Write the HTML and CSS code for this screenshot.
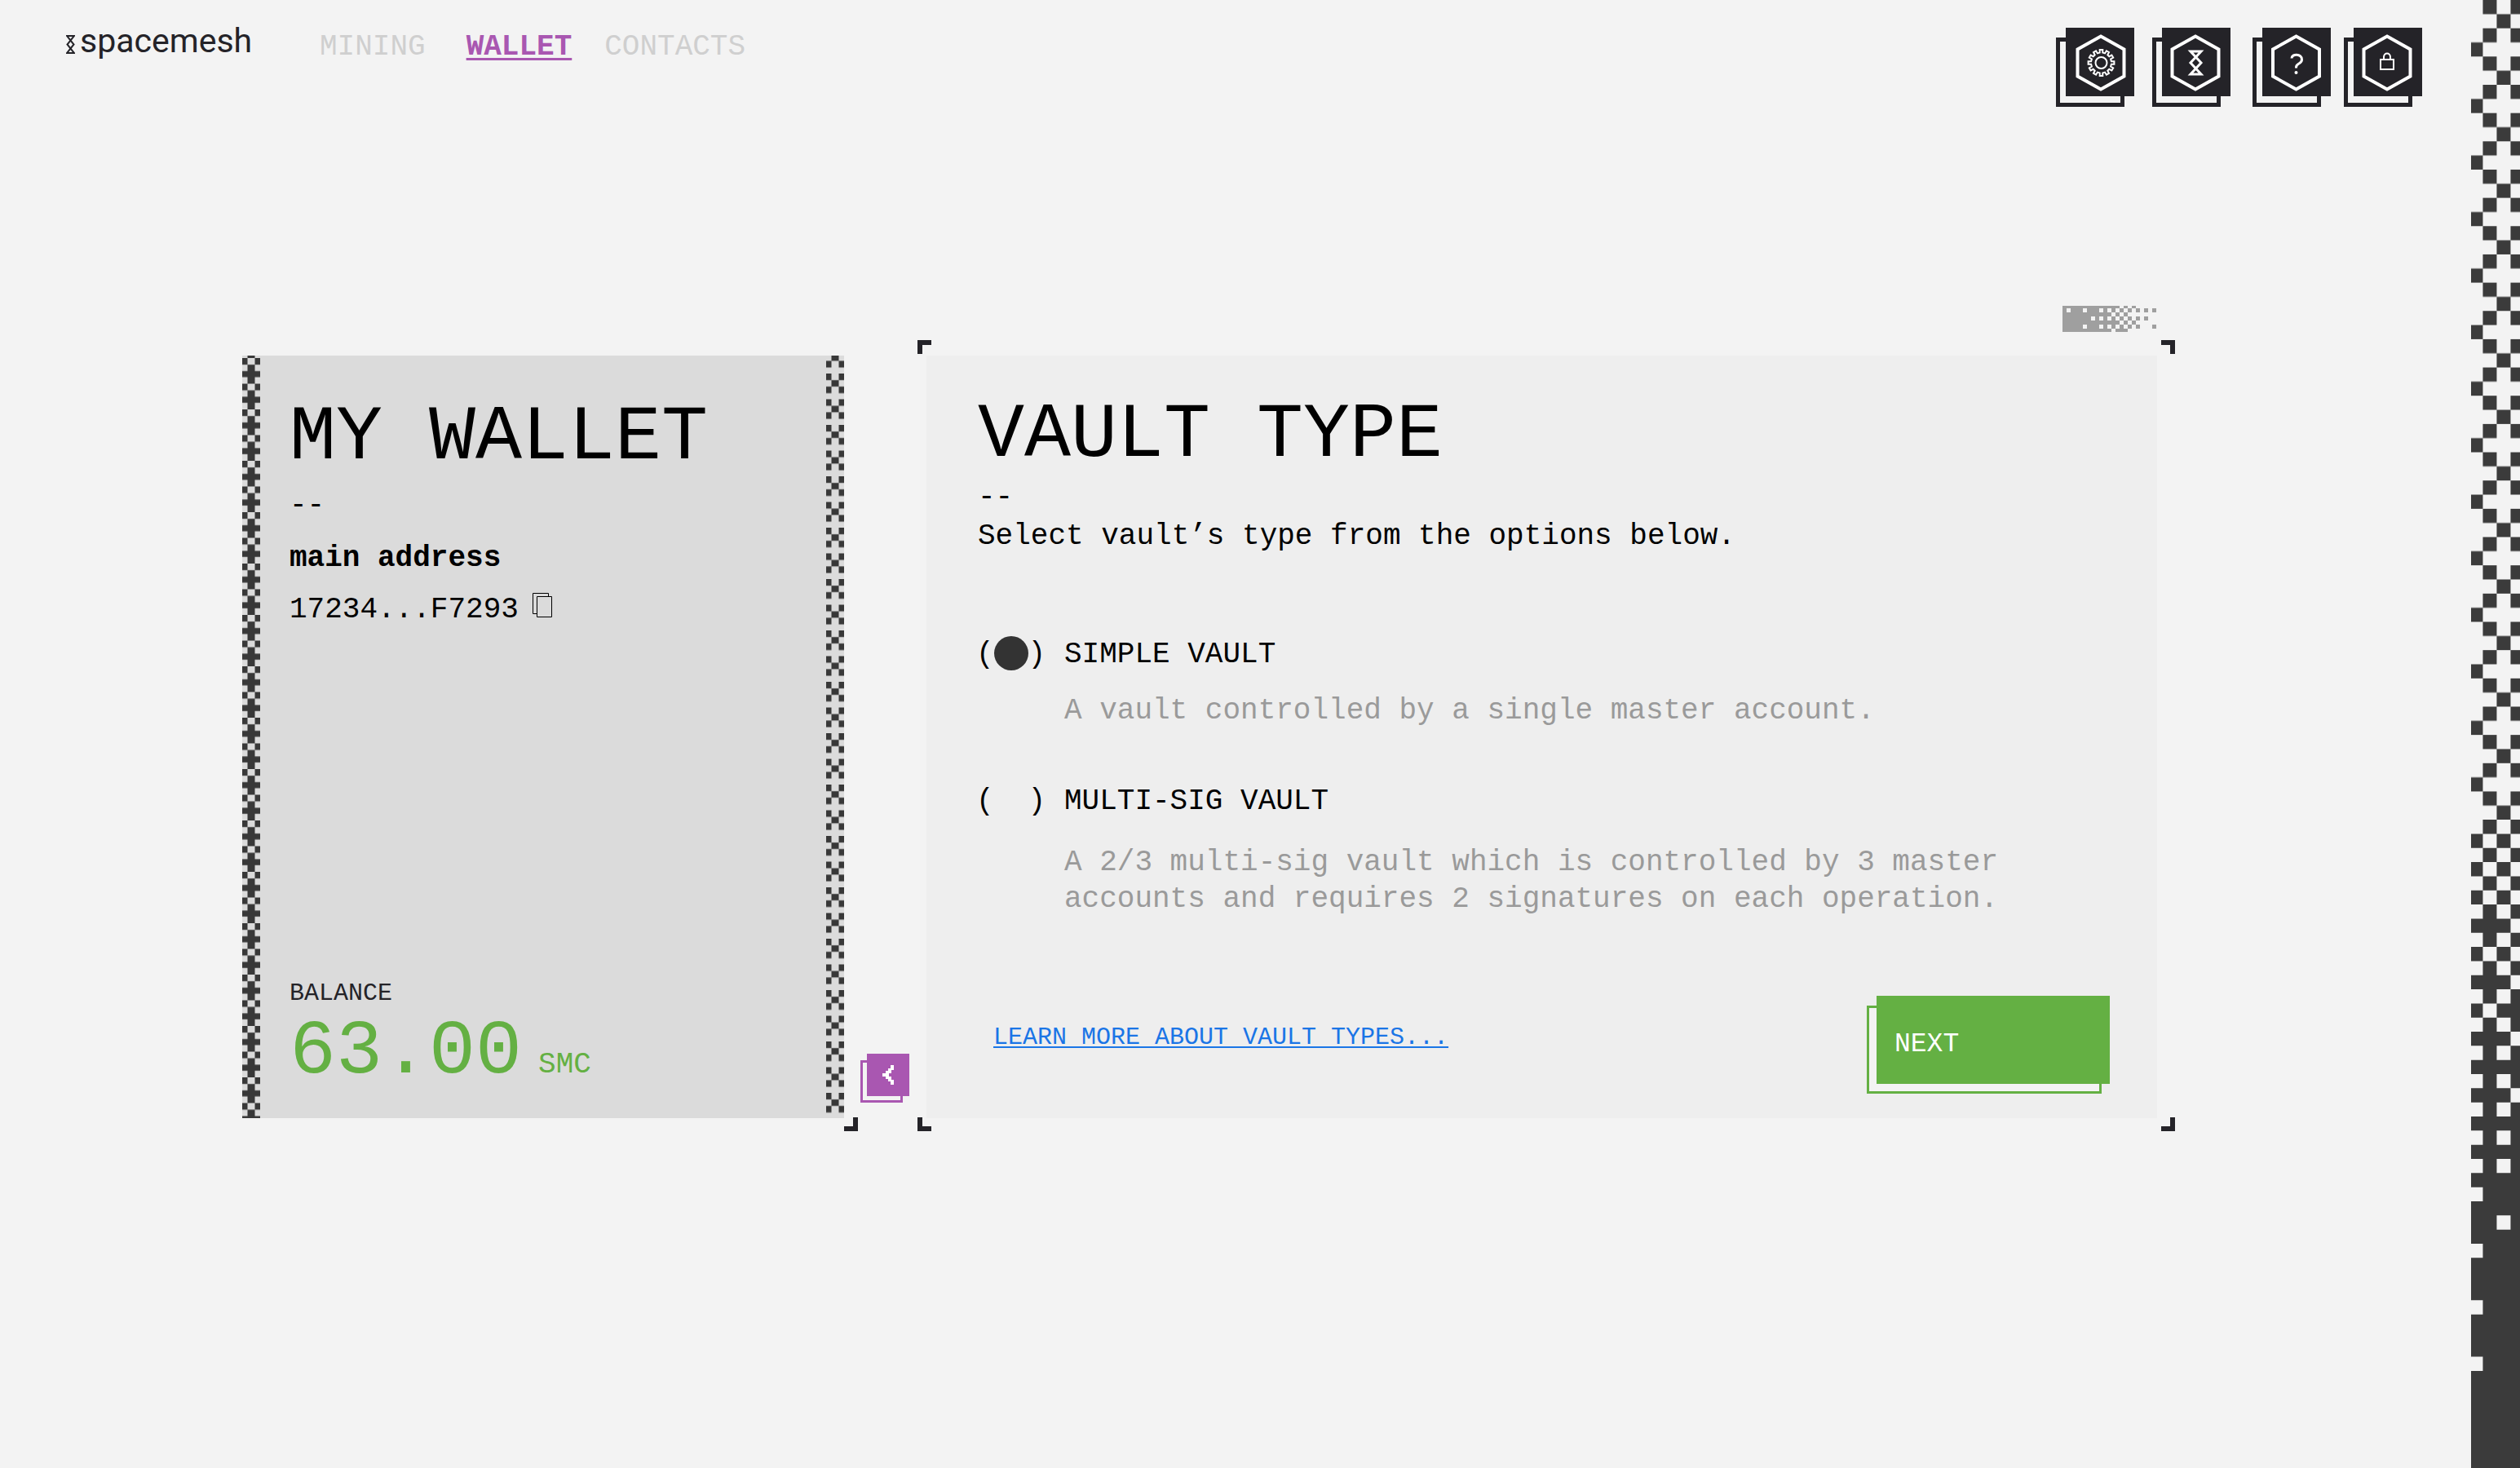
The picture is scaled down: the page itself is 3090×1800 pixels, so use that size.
FILE: index.html
```html
<!DOCTYPE html>
<html lang="en">
<head>
<meta charset="utf-8">
<meta name="viewport" content="width=device-width, initial-scale=1">
<title>Spacemesh – Vault type</title>
<link rel="stylesheet" href="styles.css">
</head>
<body>
<div class="app">
  <div class="content">
    <header class="header">
      <a class="logo" href="#">
        <svg class="logo-mark" viewBox="0 0 11 23" aria-hidden="true"><path d="M1 1h9L1.500 11.500 10 22H1L9.500 11.500z"/></svg>
        <span>spacemesh</span>
      </a>
      <nav class="nav">
        <a class="nav-link nav-mining" href="#">MINING</a>
        <a class="nav-link nav-active" href="#">WALLET</a>
        <a class="nav-link" href="#">CONTACTS</a>
      </nav>
      <div class="tools">
        <button class="tool tool-settings" aria-label="Settings">
          <svg viewBox="0 0 84 84" aria-hidden="true">
            <path class="hex" d="M43 10.500 71.500 26.500V59.500L43 75.500 14.500 59.500V26.500Z"/>
            <g class="line" transform="translate(43.500 43)">
              <circle r="7"/>
              <path d="M-1.800-15.900 1.800-15.900 1.800-12.400 4.600-11.600 6.400-14.700 9.500-12.900 7.800-9.800 9.800-7.800 12.900-9.500 14.700-6.400 11.600-4.600 12.400-1.800 15.900-1.800 15.900 1.800 12.400 1.800 11.600 4.600 14.700 6.400 12.900 9.500 9.800 7.800 7.800 9.800 9.500 12.900 6.400 14.700 4.600 11.600 1.800 12.400 1.800 15.900-1.800 15.900-1.800 12.400-4.600 11.600-6.400 14.700-9.500 12.900-7.800 9.800-9.800 7.800-12.900 9.500-14.700 6.400-11.600 4.600-12.400 1.800-15.900 1.800-15.900-1.800-12.400-1.800-11.600-4.600-14.700-6.400-12.900-9.500-9.800-7.800-7.800-9.800-9.500-12.900-6.400-14.700-4.600-11.600-1.800-12.400z"/>
            </g>
          </svg>
        </button>
        <button class="tool tool-network" aria-label="Network">
          <svg viewBox="0 0 84 84" aria-hidden="true">
            <path class="hex" d="M41 10.500 69.500 26.500V59.500L41 75.500 12.500 59.500V26.500Z"/>
            <path class="line mark" d="M35 29h13L35 43l13 14H35l13-14z"/>
          </svg>
        </button>
        <button class="tool tool-help" aria-label="Help">
          <svg viewBox="0 0 84 84" aria-hidden="true">
            <path class="hex" d="M41.500 10.500 70 26.500V59.500L41.500 75.500 13 59.500V26.500Z"/>
            <path class="line mark" d="M36 37.500c0-6 12.500-6 12.500 1.500 0 6-7 4-7 9.500v1"/>
            <circle class="dot" cx="41.500" cy="55" r="2"/>
          </svg>
        </button>
        <button class="tool" aria-label="Lock">
          <svg viewBox="0 0 84 84" aria-hidden="true">
            <path class="hex" d="M41 10.500 69.500 26.500V59.500L41 75.500 12.500 59.500V26.500Z"/>
            <path class="line" d="M33 39h16v12H33zM37 39v-3c0-6 8-6 8 0v3"/>
          </svg>
        </button>
      </div>
    </header>

    <main class="main">
      <section class="wallet">
        <svg class="edge" aria-hidden="true">
          <defs>
            <pattern id="edge-left" width="22" height="31.500" patternUnits="userSpaceOnUse" y="3">
              <path d="M0 0h6.500v8H0zM15.500 0H22v8h-6.500zM6.500 8h9v23.500h-9zM0 16h22v7.500H0z"/>
            </pattern>
          </defs>
          <rect width="22" height="100%" fill="url(#edge-left)"/>
        </svg>
        <div class="wallet-body">
          <h1 class="title">MY WALLET</h1>
          <p class="dashes">--</p>
          <h2 class="address-label">main address</h2>
          <div class="address">
            <span>17234...F7293</span>
            <button class="copy" aria-label="Copy address">
              <svg viewBox="0 0 26 32" aria-hidden="true"><path d="M6.500 6.500h18v25h-18zM6.500 27.500h-5v-25h19v4"/></svg>
            </button>
          </div>
          <div class="balance">
            <p class="balance-label">BALANCE</p>
            <p class="balance-value">63.00 <span class="unit">SMC</span></p>
          </div>
        </div>
        <svg class="edge" aria-hidden="true">
          <defs>
            <pattern id="edge-right" width="22" height="31.500" patternUnits="userSpaceOnUse" y="-9.500">
              <path d="M0 0h6.500v8H0zM15.500 0H22v8h-6.500zM6.500 8h9v8h-9zM0 16h6.500v8H0zM15.500 16H22v8h-6.500z"/>
            </pattern>
          </defs>
          <rect width="22" height="100%" fill="url(#edge-right)"/>
        </svg>
        <i class="corner corner-wallet"></i>
      </section>

      <button class="back" aria-label="Back">
        <svg viewBox="0 0 52 52" aria-hidden="true"><path d="M29 14h4v6h-3v4h-3v4h3v4h3v6h-4v-4h-3v-3h-3v-3h-4v-4h4v-3h3v-3h3z"/></svg>
      </button>

      <section class="vault">
        <svg class="pixels" viewBox="0 0 115 33" aria-hidden="true">
          <path fill-rule="evenodd" d="M0 0h70v3H0zM75 0h5v3h-5zM85 0h5v3h-5z
            M0 3h65v5H0zM5 3h5v5H5zM25 3h5v5h-5zM45 3h5v5h-5zM55 3h5v5h-5zM70 3h5v5h-5zM80 3h5v5h-5zM90 3h5v5h-5zM100 3h5v5h-5zM110 3h5v5h-5z
            M0 8h60v5H0zM65 8h5v5h-5zM75 8h5v5h-5z
            M0 13h65v5H0zM35 13h5v5h-5zM45 13h5v5h-5zM55 13h5v5h-5zM70 13h5v5h-5zM80 13h5v5h-5zM90 13h5v5h-5zM100 13h5v5h-5z
            M0 18h70v5H0zM75 18h5v5h-5zM85 18h5v5h-5z
            M0 23h65v5H0zM25 23h5v5h-5zM45 23h5v5h-5zM55 23h5v5h-5zM70 23h5v5h-5zM80 23h5v5h-5zM90 23h5v5h-5zM110 23h5v5h-5z
            M0 28h60v4H0zM65 28h15v4H65z"/>
        </svg>
        <i class="corner corner-tl"></i>
        <i class="corner corner-tr"></i>
        <i class="corner corner-bl"></i>
        <i class="corner corner-br"></i>
        <h1 class="title">VAULT TYPE</h1>
        <p class="dashes">--</p>
        <p>Select vault’s type from the options below.</p>
        <form class="form">
          <div class="option">
            <label class="option-label">
              <span class="choice"><span>(</span><input type="radio" name="vault" checked aria-describedby="simple-text"><span>)</span></span>
              SIMPLE VAULT
            </label>
            <p class="option-text option-text-near" id="simple-text">A vault controlled by a single master account.</p>
          </div>
          <div class="option">
            <label class="option-label">
              <span class="choice"><span>(</span><input type="radio" name="vault" aria-describedby="multi-text"><span>)</span></span>
              MULTI-SIG VAULT
            </label>
            <p class="option-text" id="multi-text">A 2/3 multi-sig vault which is controlled by 3 master accounts and requires 2 signatures on each operation.</p>
          </div>
          <div class="actions">
            <a class="learn" href="#">LEARN MORE ABOUT VAULT TYPES...</a>
            <button class="next" type="button"><span>NEXT</span></button>
          </div>
        </form>
      </section>
    </main>
  </div>
  <svg class="strip" viewBox="0.15 0 3.53 103.87" preserveAspectRatio="none" aria-hidden="true">
    <defs>
      <pattern id="weave" width="4" height="4" patternUnits="userSpaceOnUse">
        <path d="M1 0h1v1H1zM3 0h1v1H3zM2 1h1v1H2zM1 2h1v1H1zM3 2h1v1H3zM0 3h1v1H0z"/>
      </pattern>
    </defs>
    <rect width="4" height="58" fill="url(#weave)"/>
    <path fill-rule="evenodd" d="M0 58h4v46H0z
      M0 58h1v1H0zM2 58h1v1H2zM1 59h1v1H1zM3 59h1v1H3z
      M0 60h1v1H0zM2 60h1v1H2zM1 61h1v1H1zM3 61h1v1H3z
      M0 62h1v1H0zM2 62h1v1H2zM1 63h1v1H1zM3 63h1v1H3z
      M0 64h1v1H0zM2 64h1v1H2zM3 65h1v1H3z
      M0 66h1v1H0zM2 66h1v1H2zM1 67h1v1H1zM3 67h1v1H3z
      M0 68h1v1H0zM2 68h1v1H2zM3 69h1v1H3z
      M0 70h1v1H0zM2 70h1v1H2zM1 71h1v1H1z
      M0 72h1v1H0zM2 72h1v1H2zM3 73h1v1H3z
      M0 74h1v1H0zM2 74h1v1H2zM0 76h1v1H0zM2 76h1v1H2zM3 77h1v1H3z
      M0 78h1v1H0zM2 78h1v1H2zM0 80h1v1H0zM2 80h1v1H2z
      M0 82h1v1H0zM2 82h1v1H2zM0 84h1v1H0zM2 86h1v1H2z
      M0 88h1v1H0zM0 92h1v1H0zM0 96h1v1H0z"/>
  </svg>
</div>
</body>
</html>
```
FILE: styles.css
```css
:root {
  --ink: #242328;
  --page: #f3f3f3;
  --green: #64b043;
  --purple: #a957b1;
  --grey: #9a9a9a;
}

* {
  box-sizing: border-box;
}

body {
  margin: 0;
  background: var(--page);
  color: #000;
  font: 400 36px/45px "Liberation Mono", monospace;
}

h1, h2, p {
  margin: 0;
  font-size: inherit;
}

a {
  color: inherit;
  text-decoration: none;
}

button {
  padding: 0;
  border: 0;
  background: none;
  color: inherit;
  font: inherit;
  cursor: pointer;
}

svg {
  display: block;
}

.app {
  display: grid;
  grid-template-columns: minmax(0, 1fr) 60px;
  min-height: 100vh;
}

.strip {
  width: 60px;
  height: 100%;
  fill: #3b3b3b;
}

/* Header */

.header {
  display: flex;
  align-items: flex-start;
  padding: 28px 60px 0 81px;
}

.logo {
  display: flex;
  align-items: center;
  gap: 6px;
  width: 311px;
  color: var(--ink);
  font-family: Roboto, sans-serif;
  font-size: 41px;
}

.logo-mark {
  width: 11px;
  height: 23px;
  margin-top: 8px;
  fill: none;
  stroke: currentColor;
  stroke-width: 2;
}

.nav {
  display: flex;
  gap: 40px;
  margin-top: 7px;
}

.nav-link {
  color: #cfcfcf;
}

.nav-mining {
  margin-right: 10px;
}

.nav-active {
  color: var(--purple);
  font-weight: 700;
  text-decoration: underline;
  text-decoration-thickness: 3px;
  text-underline-offset: 4px;
}

.tools {
  display: flex;
  margin: 6px 0 0 auto;
}

.tool,
.back,
.next {
  position: relative;
  isolation: isolate;
}

.tool {
  padding: 0 0 13px 12px;
}

.tool-settings {
  margin-right: 22px;
}

.tool-network {
  margin-right: 27px;
}

.tool-help {
  margin-right: 16px;
}

.tool::before,
.back::before,
.next::before {
  content: "";
  position: absolute;
  z-index: -1;
  background: var(--page);
}

.tool::before {
  inset: 12px 12px 0 0;
  border: 5px solid var(--ink);
}

.tool svg {
  width: 84px;
  height: 84px;
  background: var(--ink);
  fill: none;
  stroke: #fff;
}

.hex {
  stroke-width: 4;
}

.line {
  stroke-width: 2;
}

.mark {
  stroke-width: 3;
}

.dot {
  fill: #fff;
  stroke: none;
}

/* Panels */

.main {
  display: flex;
  align-items: stretch;
  min-height: 935px;
  margin: 305px 385px 100px 297px;
}

.title {
  font-weight: 400;
  font-size: 95px;
  line-height: 114px;
}

.corner {
  position: absolute;
  width: 17px;
  height: 17px;
  border: 0 solid var(--ink);
}

.wallet {
  position: relative;
  display: flex;
  width: 738px;
  background: #dbdbdb;
}

.edge {
  width: 22px;
  height: auto;
  fill: #383838;
}

.wallet-body {
  flex: 1;
  display: flex;
  flex-direction: column;
  padding: 44px 0 39px 36px;
}

.wallet .dashes {
  margin: 3px 0 20px;
}

.address-label {
  font-weight: 700;
}

.address {
  display: flex;
  align-items: flex-start;
  gap: 16px;
  margin-top: 18px;
}

.copy svg {
  width: 26px;
  height: 32px;
  fill: none;
  stroke: #000;
}

.balance {
  display: flex;
  flex-direction: column;
  gap: 16px;
  margin-top: auto;
}

.balance-label {
  color: var(--ink);
  font-size: 30px;
  line-height: 28px;
}

.balance-value {
  display: flex;
  align-items: baseline;
  gap: 20px;
  color: var(--green);
  font-size: 95px;
  line-height: 84px;
}

.unit {
  font-size: 36px;
  line-height: 45px;
}

.corner-wallet {
  right: -17px;
  bottom: -16px;
  border-width: 0 6px 6px 0;
}

.back {
  align-self: flex-end;
  margin: 0 21px 19px 20px;
  padding: 0 0 8px 8px;
}

.back::before {
  inset: 8px 8px 0 0;
  border: 3px solid var(--purple);
}

.back svg {
  width: 52px;
  height: 52px;
  background: var(--purple);
  fill: #fff;
}

.vault {
  position: relative;
  flex: 1;
  display: flex;
  flex-direction: column;
  padding: 41px 58px 30px 63px;
  background: #eee;
}

.pixels {
  position: absolute;
  top: -61px;
  right: 1px;
  width: 115px;
  height: 33px;
  fill: #9f9f9f;
}

.corner-tl {
  top: -19px;
  left: -11px;
  border-width: 6px 0 0 6px;
}

.corner-tr {
  top: -19px;
  right: -22px;
  border-width: 6px 6px 0 0;
}

.corner-bl {
  bottom: -16px;
  left: -11px;
  border-width: 0 0 6px 6px;
}

.corner-br {
  right: -22px;
  bottom: -16px;
  border-width: 0 6px 6px 0;
}

.vault .dashes {
  margin: -4px 0 3px;
}

.form {
  flex: 1;
  display: flex;
  flex-direction: column;
  gap: 66px;
  margin-top: 100px;
}

.option-label {
  display: flex;
  align-items: center;
}

.choice {
  display: flex;
  align-items: center;
  width: 108px;
  height: 45px;
  margin-left: -2px;
}

.choice input {
  appearance: none;
  width: 42px;
  height: 42px;
  margin: 0 0 4px;
  border-radius: 50%;
}

.choice input:checked {
  background: #333;
}

.option-text {
  margin: 30px 100px 0 106px;
  color: var(--grey);
}

.option-text-near {
  margin-top: 24px;
}

.actions {
  display: flex;
  align-items: flex-start;
  justify-content: space-between;
  margin-top: auto;
}

.learn {
  margin: 29px 0 0 19px;
  color: #1a75e6;
  font-size: 30px;
  text-decoration: underline;
  text-decoration-thickness: 2px;
  text-underline-offset: 3px;
}

.next {
  padding: 0 0 12px 12px;
  color: #fff;
  font-size: 33px;
  text-align: left;
}

.next::before {
  inset: 12px 10px 0 0;
  border: 3px solid var(--green);
}

.next span {
  display: block;
  width: 286px;
  padding: 37px 22px 26px;
  background: var(--green);
}
```
